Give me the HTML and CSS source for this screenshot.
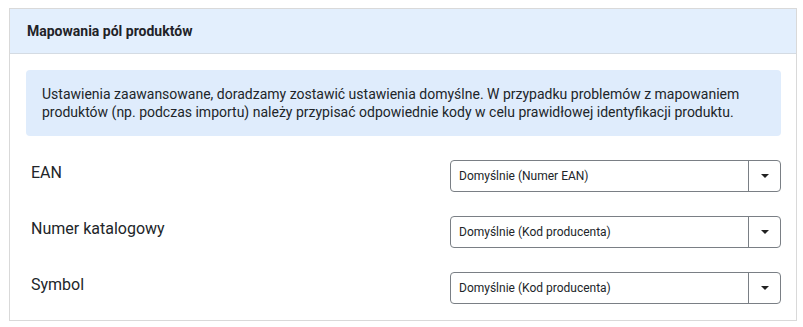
FILE: index.html
```html
<!DOCTYPE html>
<html lang="pl">
<head>
<meta charset="utf-8">
<link rel="stylesheet" href="styles.css">
</head>
<body>
<section class="panel">
  <header class="panel-head">Mapowania pól produktów</header>
  <div class="panel-body">
    <div class="alert">Ustawienia zaawansowane, doradzamy zostawić ustawienia domyślne. W przypadku problemów z mapowaniem produktów (np. podczas importu) należy przypisać odpowiednie kody w celu prawidłowej identyfikacji produktu.</div>
    <div class="rows">
      <div class="row">
        <div class="label">EAN</div>
        <div class="select"><span class="value">Domyślnie (Numer EAN)</span><span class="btn"><svg width="8" height="4" viewBox="0 0 8 4"><path d="M0 0h8L4 4z" fill="#222"/></svg></span></div>
      </div>
      <div class="row">
        <div class="label">Numer katalogowy</div>
        <div class="select"><span class="value">Domyślnie (Kod producenta)</span><span class="btn"><svg width="8" height="4" viewBox="0 0 8 4"><path d="M0 0h8L4 4z" fill="#222"/></svg></span></div>
      </div>
      <div class="row">
        <div class="label">Symbol</div>
        <div class="select"><span class="value">Domyślnie (Kod producenta)</span><span class="btn"><svg width="8" height="4" viewBox="0 0 8 4"><path d="M0 0h8L4 4z" fill="#222"/></svg></span></div>
      </div>
    </div>
  </div>
</section>
</body>
</html>
```

FILE: styles.css
```css
html, body {
  margin: 0;
  padding: 0;
  background: #fff;
}
body {
  padding: 8px 6px 0 9px;
  font-family: Roboto, "Liberation Sans", sans-serif;
  color: #212529;
}
.panel {
  border: 1px solid #d9d9d9;
  box-sizing: border-box;
  width: 788px;
}
.panel-head {
  background: #e3effd;
  border-bottom: 1px solid #d4dbe3;
  height: 45px;
  box-sizing: border-box;
  padding: 0 17px;
  display: flex;
  align-items: center;
  font-size: 14px;
  font-weight: 700;
  color: #1f2328;
}
.panel-body {
  padding: 16px 15px 16px 16px;
}
.alert {
  background: #dfecfc;
  border-radius: 4px;
  padding: 15px 16px 15px 16px;
  font-size: 14px;
  line-height: 18px;
  color: #212529;
}
.rows {
  display: flex;
  flex-direction: column;
  gap: 24px;
  margin-top: 24px;
}
.row {
  display: grid;
  grid-template-columns: 1fr 331px;
  align-items: start;
}
.label {
  font-size: 16px;
  padding-left: 5px;
  line-height: 26px;
  color: #212529;
}
.select {
  display: flex;
  height: 32px;
  box-sizing: border-box;
  border: 1px solid #7a7f85;
  border-radius: 4px;
  font-size: 12px;
  color: #212529;
}
.value {
  flex: 1;
  display: flex;
  align-items: center;
  padding-left: 8px;
}
.btn {
  width: 31px;
  border-left: 1px solid #7a7f85;
  display: flex;
  align-items: center;
  justify-content: center;
}
```
